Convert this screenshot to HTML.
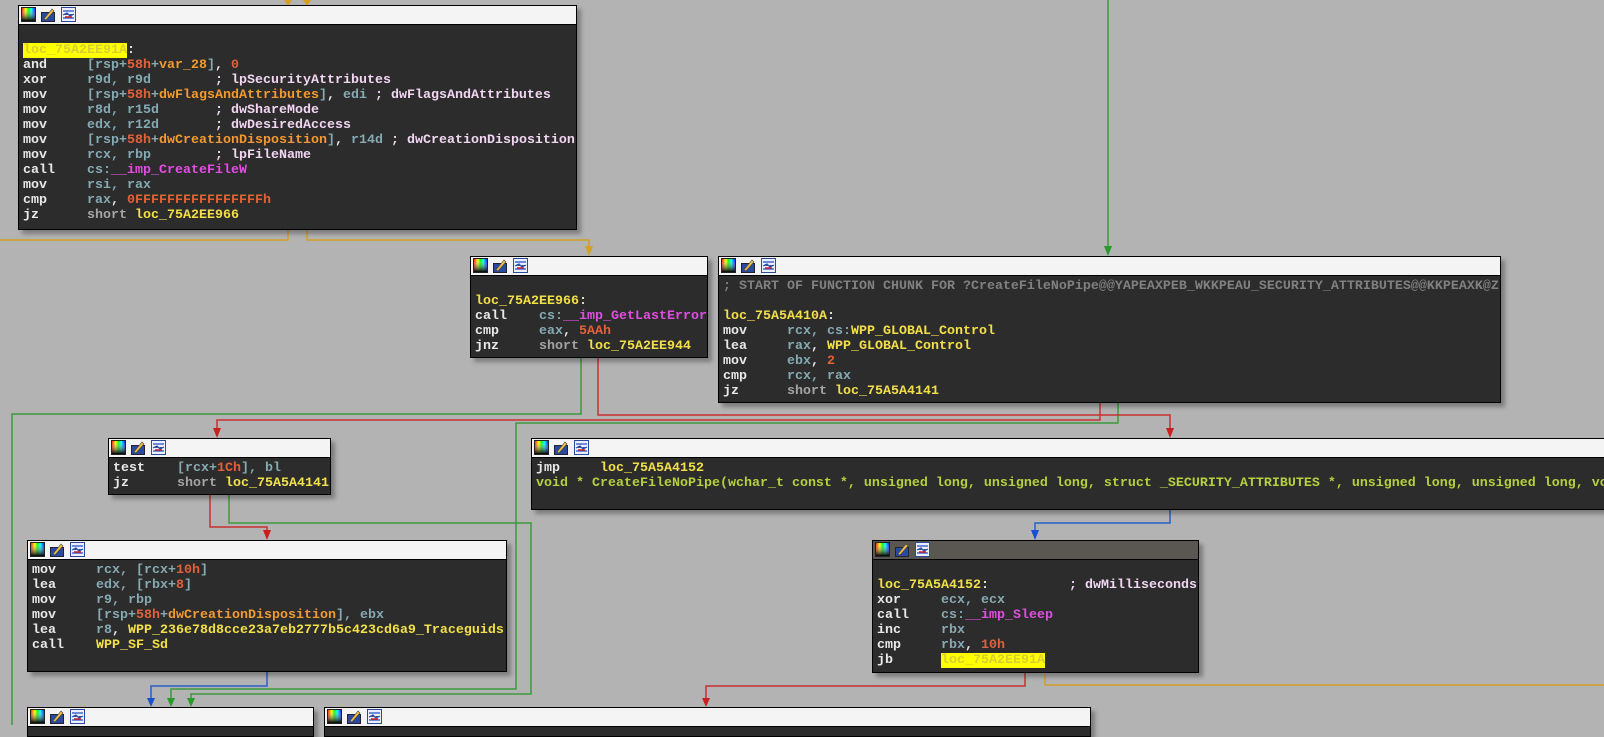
<!DOCTYPE html>
<html><head><meta charset="utf-8"><style>
html,body{margin:0;padding:0}
body{width:1604px;height:725px;background:#b3b3b3;position:relative;overflow:hidden;font-family:"Liberation Mono","DejaVu Sans Mono",monospace}
.b{position:absolute;background:#2c2c2c;border:1px solid #000;box-shadow:4px 4px 4px rgba(0,0,0,.3);box-sizing:border-box;overflow:hidden}
.h{height:18px;background:#f4f4f4;border-bottom:1px solid #000;position:relative}
.h.d{background:#5a5652}
.h svg{position:absolute;left:2px;top:1px}
pre{margin:0;padding:3px 0 0 4px;font:bold 13.33px/15px "Liberation Mono",monospace;color:#e8e8e8;white-space:pre}
.r{color:#86a9b2}.n{color:#e2603a}.v{color:#f09a30}.l{color:#f2e048}.c{color:#f0d6f0}.i{color:#e04ee0}.g{color:#a4a4a4}.y{color:#b4d040}.k{color:#808080}
.hl{background:#ffff00;color:#d8d030}
svg.e{position:absolute;left:0;top:0}
</style></head><body>
<svg class="e" width="1604" height="725" fill="none" stroke-width="1.5">
<g stroke="#d4a024">
<polyline points="288,0 288,5"/><polyline points="307,0 307,5"/>
<polyline points="288,230 288,240 0,240"/>
<polyline points="307,230 307,240 589,240 589,250"/>
<polyline points="1045,672 1045,685 1604,685"/>
</g>
<g fill="#d4a024"><path d="M284,0 L292,0 288,6Z"/><path d="M303,0 L311,0 307,6Z"/><path d="M585,246 L593,246 589,256Z"/></g>
<g stroke="#3c9a3c">
<polyline points="1108,0 1108,248"/>
<polyline points="581,358 581,414 12,414 12,725"/>
<polyline points="1118,403 1118,423 516,423 516,689 171,689 171,700"/>
<polyline points="229,495 229,523 531,523 531,694 191,694 191,700"/>
</g>
<g fill="#2a9a2a"><path d="M1104,246 L1112,246 1108,256Z"/><path d="M167,698 L175,698 171,707Z"/><path d="M187,698 L195,698 191,707Z"/></g>
<g stroke="#c83232">
<polyline points="598,358 598,415 1170,415 1170,430"/>
<polyline points="1100,403 1100,420 217,420 217,430"/>
<polyline points="210,495 210,527 267,527 267,532"/>
<polyline points="1025,672 1025,686 706,686 706,700"/>
</g>
<g fill="#c82020"><path d="M1166,428 L1174,428 1170,438Z"/><path d="M213,428 L221,428 217,438Z"/><path d="M263,530 L271,530 267,540Z"/><path d="M702,698 L710,698 706,707Z"/></g>
<g stroke="#2a5fcc">
<polyline points="1170,510 1170,523 1035,523 1035,532"/>
<polyline points="267,672 267,686 151,686 151,700"/>
</g>
<g fill="#1a50d0"><path d="M1031,530 L1039,530 1035,540Z"/><path d="M147,698 L155,698 151,707Z"/></g>
</svg>

<svg width="0" height="0" style="position:absolute"><defs>
<linearGradient id="rb" x1="0" x2="1"><stop offset="0" stop-color="#f00"/><stop offset=".3" stop-color="#ff0"/><stop offset=".5" stop-color="#0f0"/><stop offset=".7" stop-color="#0ff"/><stop offset="1" stop-color="#00f"/></linearGradient>
<linearGradient id="dk" x1="0" y1="0" x2="0" y2="1"><stop offset="0" stop-color="#fff" stop-opacity="0"/><stop offset="1" stop-color="#000"/></linearGradient>
<g id="ic">
<rect x=".5" y=".5" width="14" height="14" fill="url(#rb)" stroke="#222"/><rect x="1" y="1" width="13" height="13" fill="url(#dk)"/>
<rect x="20.5" y="5.5" width="13" height="9" fill="#2a4aa0" stroke="#223"/><path d="M23,12 L31,2 33,4 25,13Z" fill="#f0c040" stroke="#444" stroke-width=".6"/>
<rect x="40.5" y=".5" width="14" height="14" fill="#eef" stroke="#2a4aa0"/><path d="M42,4 H53 M42,8 L46,6 49,9 53,7 M42,11 H53" stroke="#2050c0" stroke-width="1.2"/><path d="M44,10 H51" stroke="#d02020" stroke-width="1.5"/>
</g></defs></svg>

<div class="b" style="left:18px;top:5px;width:559px;height:225px"><div class="h"><svg width="60" height="16"><use href="#ic"/></svg></div><pre>

<span class="hl">loc_75A2EE91A</span>:
and     <span class="r">[rsp+</span><span class="n">58h</span><span class="r">+</span><span class="v">var_28</span><span class="r">]</span>, <span class="n">0</span>
xor     <span class="r">r9d, r9d</span>        <span class="c">; lpSecurityAttributes</span>
mov     <span class="r">[rsp+</span><span class="n">58h</span><span class="r">+</span><span class="v">dwFlagsAndAttributes</span><span class="r">]</span>, <span class="r">edi</span> <span class="c">; dwFlagsAndAttributes</span>
mov     <span class="r">r8d, r15d</span>       <span class="c">; dwShareMode</span>
mov     <span class="r">edx, r12d</span>       <span class="c">; dwDesiredAccess</span>
mov     <span class="r">[rsp+</span><span class="n">58h</span><span class="r">+</span><span class="v">dwCreationDisposition</span><span class="r">]</span>, <span class="r">r14d</span> <span class="c">; dwCreationDisposition</span>
mov     <span class="r">rcx, rbp</span>        <span class="c">; lpFileName</span>
call    <span class="r">cs:</span><span class="i">__imp_CreateFileW</span>
mov     <span class="r">rsi, rax</span>
cmp     <span class="r">rax</span>, <span class="n">0FFFFFFFFFFFFFFFFh</span>
jz      <span class="g">short</span> <span class="l">loc_75A2EE966</span></pre></div>

<div class="b" style="left:470px;top:256px;width:238px;height:102px"><div class="h"><svg width="60" height="16"><use href="#ic"/></svg></div><pre>

<span class="l">loc_75A2EE966</span>:
call    <span class="r">cs:</span><span class="i">__imp_GetLastError</span>
cmp     <span class="r">eax</span>, <span class="n">5AAh</span>
jnz     <span class="g">short</span> <span class="l">loc_75A2EE944</span></pre></div>

<div class="b" style="left:718px;top:256px;width:783px;height:147px"><div class="h"><svg width="60" height="16"><use href="#ic"/></svg></div><pre><span class="k">; START OF FUNCTION CHUNK FOR ?CreateFileNoPipe@@YAPEAXPEB_WKKPEAU_SECURITY_ATTRIBUTES@@KKPEAXK@Z</span>

<span class="l">loc_75A5A410A</span>:
mov     <span class="r">rcx, cs:</span><span class="l">WPP_GLOBAL_Control</span>
lea     <span class="r">rax</span>, <span class="l">WPP_GLOBAL_Control</span>
mov     <span class="r">ebx</span>, <span class="n">2</span>
cmp     <span class="r">rcx, rax</span>
jz      <span class="g">short</span> <span class="l">loc_75A5A4141</span></pre></div>

<div class="b" style="left:108px;top:438px;width:223px;height:57px"><div class="h"><svg width="60" height="16"><use href="#ic"/></svg></div><pre>test    <span class="r">[rcx+</span><span class="n">1Ch</span><span class="r">], bl</span>
jz      <span class="g">short</span> <span class="l">loc_75A5A4141</span></pre></div>

<div class="b" style="left:531px;top:438px;width:1090px;height:72px"><div class="h"><svg width="60" height="16"><use href="#ic"/></svg></div><pre>jmp     <span class="l">loc_75A5A4152</span>
<span class="y">void * CreateFileNoPipe(wchar_t const *, unsigned long, unsigned long, struct _SECURITY_ATTRIBUTES *, unsigned long, unsigned long, void *)</span></pre></div>

<div class="b" style="left:27px;top:540px;width:480px;height:132px"><div class="h"><svg width="60" height="16"><use href="#ic"/></svg></div><pre>mov     <span class="r">rcx, [rcx+</span><span class="n">10h</span><span class="r">]</span>
lea     <span class="r">edx, [rbx+</span><span class="n">8</span><span class="r">]</span>
mov     <span class="r">r9, rbp</span>
mov     <span class="r">[rsp+</span><span class="n">58h</span><span class="r">+</span><span class="v">dwCreationDisposition</span><span class="r">], ebx</span>
lea     <span class="r">r8</span>, <span class="l">WPP_236e78d8cce23a7eb2777b5c423cd6a9_Traceguids</span>
call    <span class="l">WPP_SF_Sd</span></pre></div>

<div class="b" style="left:872px;top:540px;width:327px;height:133px"><div class="h d"><svg width="60" height="16"><use href="#ic"/></svg></div><pre>

<span class="l">loc_75A5A4152</span>:          <span class="c">; dwMilliseconds</span>
xor     <span class="r">ecx, ecx</span>
call    <span class="r">cs:</span><span class="i">__imp_Sleep</span>
inc     <span class="r">rbx</span>
cmp     <span class="r">rbx</span>, <span class="n">10h</span>
jb      <span class="hl">loc_75A2EE91A</span></pre></div>

<div class="b" style="left:27px;top:707px;width:287px;height:30px"><div class="h"><svg width="60" height="16"><use href="#ic"/></svg></div></div>
<div class="b" style="left:324px;top:707px;width:767px;height:30px"><div class="h"><svg width="60" height="16"><use href="#ic"/></svg></div></div>
</body></html>
